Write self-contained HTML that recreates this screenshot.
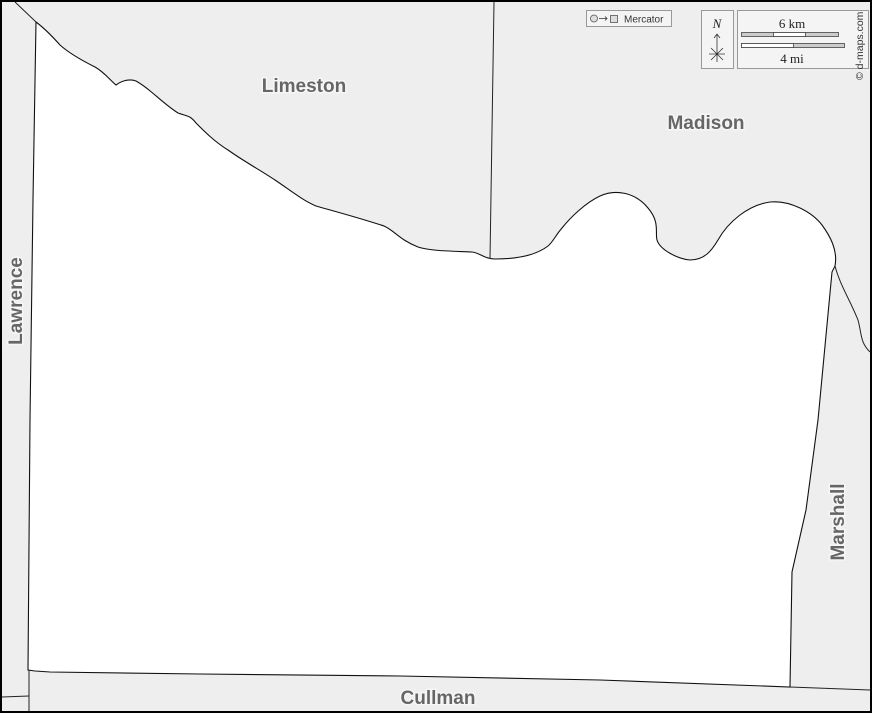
<!DOCTYPE html>
<html><head><style>
html,body{margin:0;padding:0;background:#000;}
svg{display:block;}
.l{font-family:"Liberation Sans",sans-serif;font-weight:bold;font-size:19px;fill:#666;stroke:#f6f6f6;stroke-width:3px;paint-order:stroke;text-anchor:middle;}
</style></head><body>
<svg width="872" height="713" viewBox="0 0 872 713" xmlns="http://www.w3.org/2000/svg">
<rect x="0" y="0" width="872" height="713" fill="#000"/>
<rect x="2" y="2" width="868" height="709" fill="#eeeeee"/>
<path d="M36,22 C44,28 52,36 60,45 C70,54 85,62 95,67 C104,72 110,80 116,85 C120,82 128,78 136,81 C145,86 150,91 155,95 C162,101 170,108 178,113 C186,116 190,115 196,123 C205,132 215,142 228,150 C245,162 260,170 275,180 C290,190 302,200 316,206 C330,210 360,218 384,226 C395,231 400,240 418,247 C430,251 450,251 472,252 C480,253 485,259 495,259 C515,259 535,256 548,246 C553,242 555,236 562,228 C570,218 585,203 600,196 C615,189 635,192 648,208 C660,222 655,232 657,240 C660,250 678,259 690,260 C705,260 712,250 718,240 C728,222 748,205 770,202 C790,200 812,212 822,225 C830,236 838,250 835,266 L832,272 L818,420 L806,510 L792,572 L790,687 L600,680 L400,676 L200,674 L50,672 L35,671 L28,670 L30,420 L33,200 Z" fill="#fff" stroke="#111" stroke-width="1.1"/>
<g fill="none" stroke="#222" stroke-width="1">
<path d="M15,2 L36,22"/>
<path d="M494,2 L490,259"/>
<path d="M835,266 C840,285 850,300 858,320 C862,335 860,342 870,352"/>
<path d="M790,687 L870,690"/>
<path d="M29,670 L29,711"/>
<path d="M2,697 L29,696"/>
</g>
<text class="l" x="304" y="92">Limeston</text>
<text class="l" x="706" y="129">Madison</text>
<text class="l" x="438" y="704">Cullman</text>
<text class="l" transform="translate(22,301) rotate(-90)">Lawrence</text>
<text class="l" transform="translate(844,522) rotate(-90)">Marshall</text>
<rect x="586.5" y="10.5" width="85" height="16" fill="#f4f4f4" stroke="#999"/>
<circle cx="594" cy="18.5" r="3.5" fill="#ddd" stroke="#555" stroke-width="0.8"/>
<path d="M599,18.5 H607 M605,16.5 L607,18.5 L605,20.5" stroke="#333" stroke-width="0.8" fill="none"/>
<rect x="610.5" y="15.5" width="7" height="7" fill="#ddd" stroke="#555" stroke-width="0.8"/>
<text x="624" y="22.5" font-family="Liberation Sans,sans-serif" font-size="10" fill="#333">Mercator</text>
<rect x="701.5" y="10.5" width="32" height="58" fill="#f4f4f4" stroke="#999"/>
<text x="717" y="28" font-family="Liberation Serif,serif" font-style="italic" font-size="13" fill="#222" text-anchor="middle">N</text>
<path d="M717,46 V35 M714,38 L717,34 L720,38 M709,54 H725 M717,46 V62 M711,48 L723,60 M723,48 L711,60" stroke="#333" stroke-width="0.8" fill="none"/>
<rect x="737.5" y="10.5" width="131" height="58" fill="#f4f4f4" stroke="#999"/>
<text x="792" y="28" font-family="Liberation Serif,serif" font-size="13" fill="#222" text-anchor="middle">6 km</text>
<rect x="741.5" y="32.5" width="97" height="4" fill="#ccc" stroke="#444" stroke-width="0.8"/>
<rect x="773.5" y="32.5" width="32" height="4" fill="#fff" stroke="#444" stroke-width="0.8"/>
<rect x="741.5" y="43.5" width="103" height="4" fill="#ccc" stroke="#444" stroke-width="0.8"/>
<rect x="741.5" y="43.5" width="52" height="4" fill="#fff" stroke="#444" stroke-width="0.8"/>
<text x="792" y="63" font-family="Liberation Serif,serif" font-size="13" fill="#222" text-anchor="middle">4 mi</text>
<text transform="translate(863,80) rotate(-90)" font-family="Liberation Sans,sans-serif" font-size="10.5" fill="#333">© d-maps.com</text>
</svg>
</body></html>
